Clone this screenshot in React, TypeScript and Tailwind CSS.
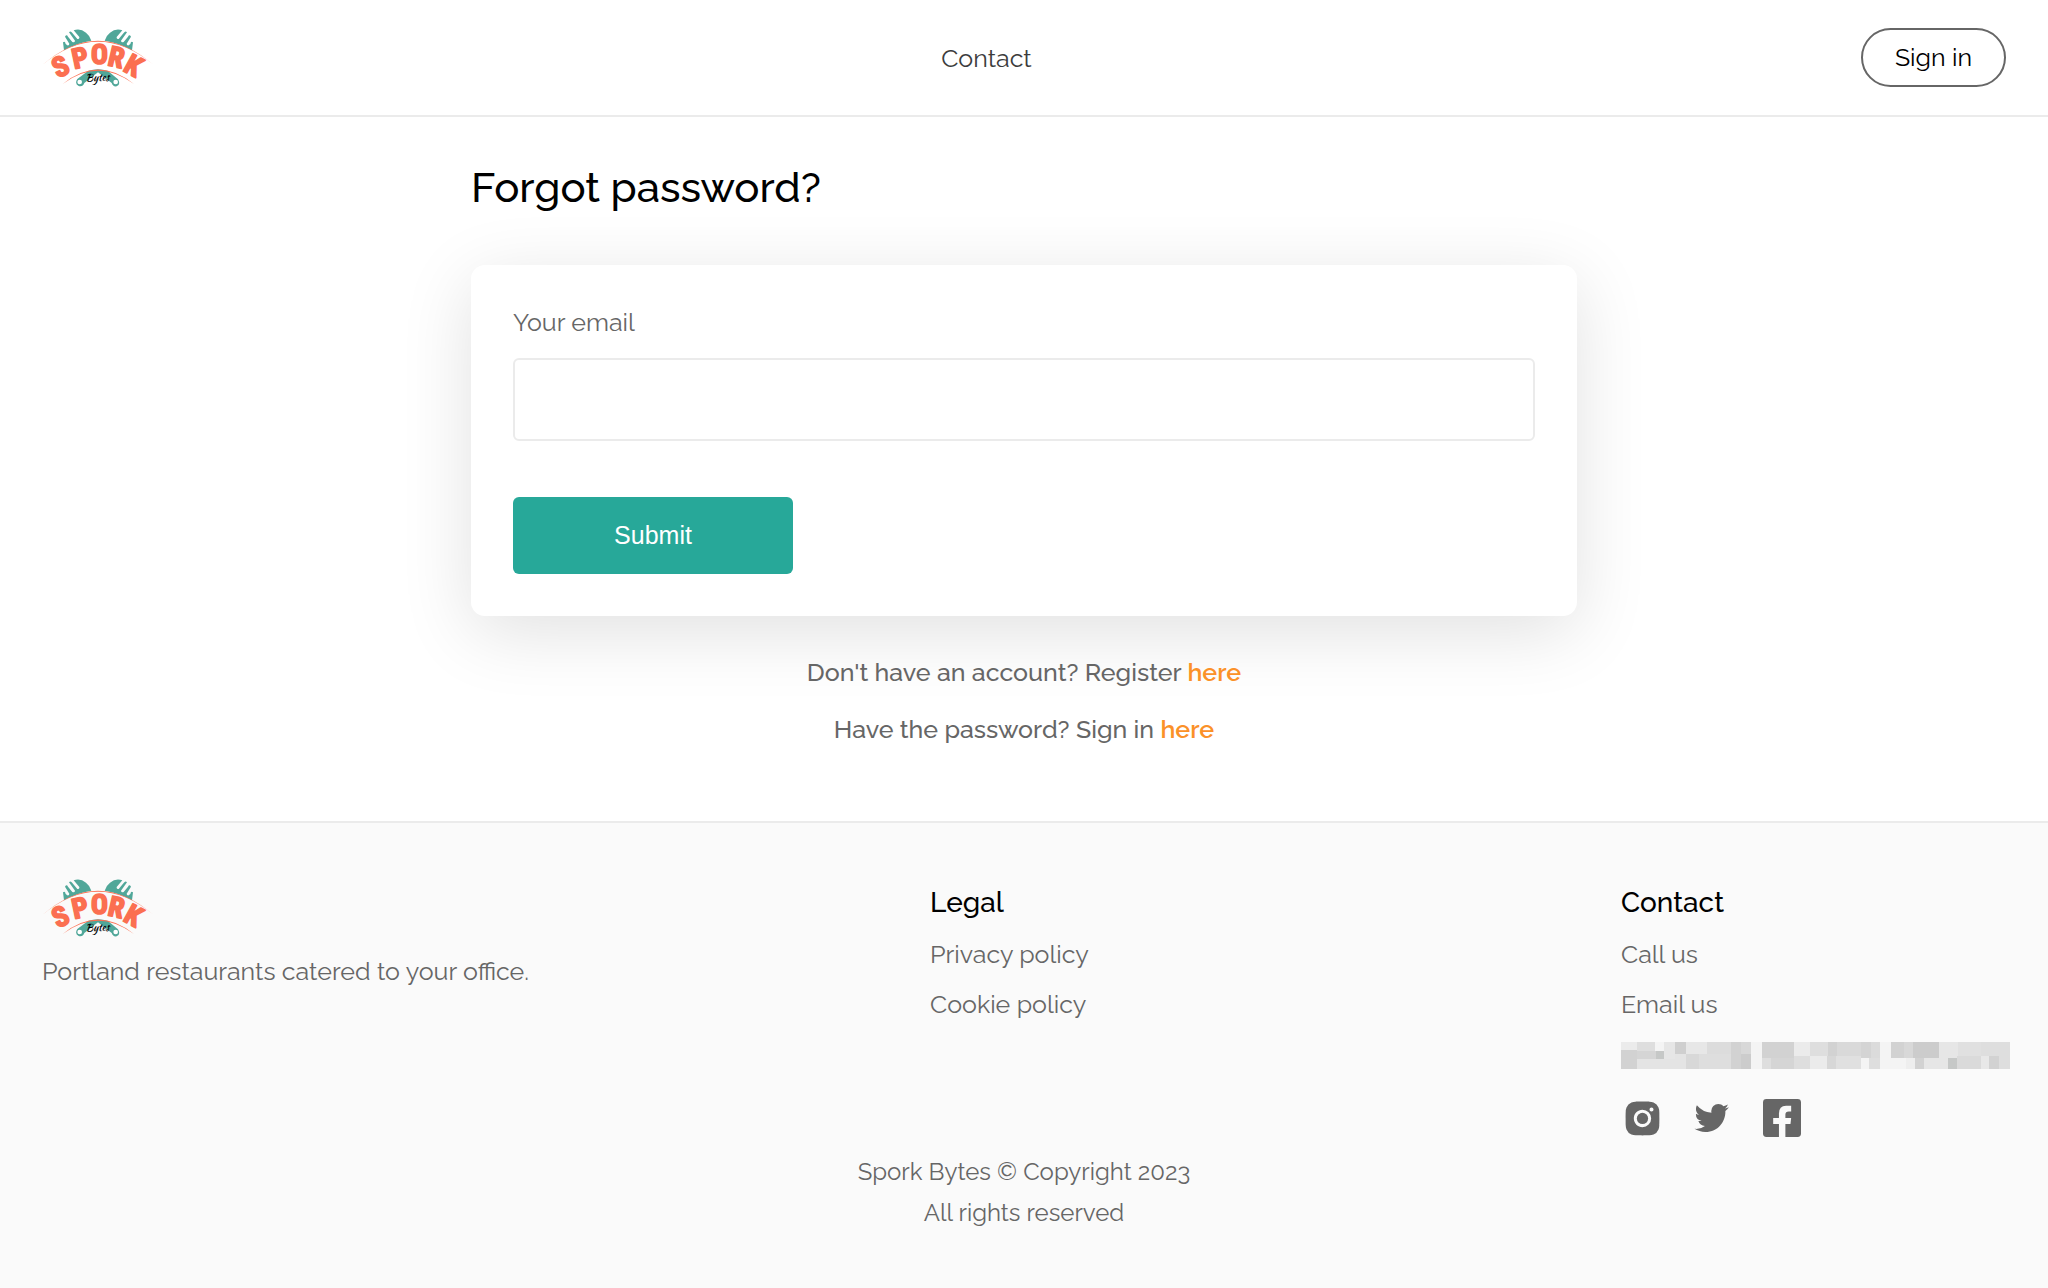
import type { ReactNode } from "react";
import { BiLogoInstagramAlt, BiLogoTwitter } from "react-icons/bi";

const logoLetters = [
  { char: "S", x: 104, y: 195, rotate: -25 },
  { char: "P", x: 156, y: 171, rotate: -12 },
  { char: "O", x: 208, y: 162, rotate: 0 },
  { char: "R", x: 253, y: 169, rotate: 13 },
  { char: "K", x: 296, y: 191, rotate: 29 },
];

// x, y, width, height, fill
const mosaic: [number, number, number, number, string][] = [
  [0, 0, 48, 24, "#ebebeb"],
  [0, 24, 48, 57, "#d2d2d2"],
  [48, 0, 54, 27, "#dedede"],
  [102, 0, 27, 27, "#f4f4f4"],
  [48, 27, 57, 24, "#d5d5d5"],
  [105, 27, 24, 24, "#c6c8c7"],
  [48, 51, 147, 30, "#e4e4e4"],
  [129, 0, 33, 51, "#e6e6e6"],
  [162, 0, 33, 36, "#cfcfcf"],
  [162, 36, 33, 45, "#e4e4e4"],
  [195, 0, 63, 36, "#e7e7e7"],
  [195, 36, 39, 45, "#d8d8d8"],
  [258, 0, 72, 36, "#dcdcdc"],
  [234, 36, 96, 45, "#dedede"],
  [330, 0, 30, 81, "#d2d2d2"],
  [360, 0, 30, 36, "#d8d8d8"],
  [360, 36, 30, 45, "#cccccc"],
  [390, 0, 33, 81, "#f4f4f4"],
  [423, 0, 96, 48, "#d2d2d2"],
  [423, 48, 27, 33, "#dedede"],
  [450, 48, 69, 33, "#d5d5d5"],
  [519, 0, 48, 42, "#ebebeb"],
  [519, 42, 48, 39, "#dedede"],
  [567, 0, 54, 42, "#dedede"],
  [567, 42, 51, 39, "#ebebeb"],
  [621, 0, 27, 42, "#d2d2d2"],
  [618, 42, 27, 39, "#d7d7d7"],
  [648, 0, 72, 48, "#d9d9d9"],
  [645, 42, 75, 39, "#e0e0e0"],
  [720, 0, 30, 48, "#d4d4d4"],
  [720, 48, 24, 33, "#f4f4f4"],
  [750, 0, 27, 48, "#dbdbdb"],
  [744, 48, 33, 33, "#dedede"],
  [777, 0, 33, 81, "#f4f4f4"],
  [810, 0, 39, 48, "#d2d2d2"],
  [849, 0, 27, 48, "#d8d8d8"],
  [810, 48, 45, 33, "#f4f4f4"],
  [855, 48, 27, 33, "#eeeeee"],
  [876, 0, 78, 48, "#cccccc"],
  [882, 48, 27, 33, "#d2d2d2"],
  [909, 48, 72, 33, "#e6e6e6"],
  [954, 0, 57, 48, "#e6e6e6"],
  [981, 48, 27, 33, "#c6c8c7"],
  [1011, 0, 69, 42, "#e0e0e0"],
  [1008, 42, 72, 39, "#dadada"],
  [1080, 0, 87, 81, "#dedede"],
  [1080, 42, 24, 39, "#e8e8e8"],
  [1104, 42, 30, 39, "#d2d2d2"],
];

function Logo() {
  return (
    <svg viewBox="36 56 336 174" className="block w-28" role="img" aria-label="Spork Bytes">
      <g fill="#50a799">
        <path d="M102 120 L99 96 Q105 90 107 101 L112 105 Q118 106 118 100 L105 79 Q110 71 114 79 L127 95 Q134 98 135 91 L117 66 Q122 60 127 68 L142 86 Q149 87 148 80 L131 60 Q151 53 168 67 Q180 76 184 91 Q140 98 102 120 Z" />
        <path d="M306 120 L309 96 Q303 90 301 101 L296 105 Q290 106 290 100 L303 79 Q298 71 294 79 L281 95 Q274 98 273 91 L291 66 Q286 60 281 68 L266 86 Q259 87 260 80 L277 60 Q257 53 240 67 Q228 76 224 91 Q268 98 306 120 Z" />
        <path d="M174 182 Q204 172 234 182 L264 207 Q273 222 260 228 Q249 230 245 218 L204 186 L163 218 Q158 231 146 227 Q133 220 142 206 Z" />
      </g>
      <path d="M36 165 Q204 17 372 165 Q204 24 36 165 Z" fill="#fb6f51" />
      <path d="M98 221 Q204 134 312 221 Q204 141 98 221 Z" fill="#fb6f51" />
      <circle cx="149" cy="215" r="7" fill="#fff" />
      <circle cx="257" cy="215" r="7" fill="#fff" />
      <g
        className="font-['Roboto_Condensed','Roboto',sans-serif] text-[84px] font-bold"
        fill="#fb6f51"
        stroke="#fb6f51"
        strokeWidth="5"
        strokeLinejoin="round"
        textAnchor="middle"
      >
        {logoLetters.map(({ char, x, y, rotate }) => (
          <text key={char} x={x} y={y} transform={`rotate(${rotate} ${x} ${y})`}>
            {char}
          </text>
        ))}
      </g>
      <text
        x="203"
        y="212"
        textAnchor="middle"
        transform="rotate(-3 203 212)"
        className="font-['Kaushan_Script','Pacifico','Dancing_Script','Lato',cursive] text-[31px]"
      >
        Bytes
      </text>
    </svg>
  );
}

function FacebookIcon() {
  return (
    <svg viewBox="0 0 112 112" className="size-[38px] shrink-0" fill="currentColor" aria-hidden="true">
      <path d="M10 0 H102 Q112 0 112 10 V102 Q112 112 102 112 H66 V74 H81 L83 56 H66 V46 Q66 37 76 37 H83 V20 H68 Q47 20 47 43 V56 H30 V74 H47 V112 H10 Q0 112 0 102 V10 Q0 0 10 0 Z" />
    </svg>
  );
}

function FooterLink({ href, children }: { href: string; children: ReactNode }) {
  return (
    <li>
      <a href={href} className="block leading-9">
        {children}
      </a>
    </li>
  );
}

function Header() {
  return (
    <header className="flex items-center justify-between border-b-2 border-[#ebebeb] px-[42px] py-7">
      <a href="/">
        <Logo />
      </a>
      <nav className="pr-[42px]">
        <a href="/contact" className="text-[#3c3c3c]">Contact</a>
      </nav>
      <button type="button" className="h-[59px] rounded-full border-2 border-[#666] px-8 pb-0.5 text-black">
        Sign in
      </button>
    </header>
  );
}

function ForgotPassword() {
  return (
    <main className="mx-auto w-full max-w-[1106px] pt-[47px] pb-[74px]">
      <h1 className="mb-[53px] text-[42px] leading-[48px] font-medium text-black">Forgot password?</h1>
      <form
        className="flex flex-col items-start rounded-[14px] bg-white p-[42px] shadow-[0_16px_72px_rgba(0,0,0,0.12)]"
        onSubmit={(e) => e.preventDefault()}
      >
        <label htmlFor="email" className="leading-[30px]">Your email</label>
        <input
          id="email"
          type="email"
          className="mt-[21px] h-[83px] w-full rounded-md border-2 border-[#ebebeb] bg-white px-6 outline-none"
        />
        <button
          type="submit"
          className="mt-14 h-[77px] w-[280px] rounded-md bg-[#27a899] pb-0.5 font-['Liberation_Sans',sans-serif] text-white"
        >
          Submit
        </button>
      </form>
      <div className="mt-[38px] flex flex-col gap-[21px] text-center leading-9 font-medium">
        <p>
          Don't have an account? Register <a href="/register" className="font-semibold text-[#fb9128]">here</a>
        </p>
        <p>
          Have the password? Sign in <a href="/login" className="font-semibold text-[#fb9128]">here</a>
        </p>
      </div>
    </main>
  );
}

function Footer() {
  return (
    <footer className="border-t-2 border-[#ebebeb] bg-[#fafafa] px-[42px] pt-14 pb-14">
      <div className="grid grid-cols-[minmax(0,888fr)_minmax(0,691fr)_minmax(0,385fr)]">
        <div>
          <Logo />
          <p className="mt-4 leading-9">Portland restaurants catered to your office.</p>
        </div>
        <div className="pt-[5px]">
          <h2 className="text-[28px] leading-[38px] font-medium text-black">Legal</h2>
          <ul className="mt-3.5 flex flex-col gap-3.5">
            <FooterLink href="/privacy">Privacy policy</FooterLink>
            <FooterLink href="/cookies">Cookie policy</FooterLink>
          </ul>
        </div>
        <div className="pt-[5px]">
          <h2 className="text-[28px] leading-[38px] font-medium text-black">Contact</h2>
          <ul className="mt-3.5 flex flex-col gap-3.5">
            <FooterLink href="tel:">Call us</FooterLink>
            <FooterLink href="mailto:">Email us</FooterLink>
          </ul>
          <svg viewBox="0 0 1167 81" className="mt-5 block w-[389px] max-w-none" shapeRendering="crispEdges" aria-hidden="true">
            {mosaic.map(([x, y, width, height, fill], index) => (
              <rect key={index} x={x} y={y} width={width} height={height} fill={fill} />
            ))}
          </svg>
          <div className="mt-7 flex gap-7">
            <a href="#instagram" aria-label="Instagram" className="flex size-[42px] items-center justify-center">
              <BiLogoInstagramAlt size={45} className="shrink-0" />
            </a>
            <a href="#twitter" aria-label="Twitter" className="flex size-[42px] items-center justify-center">
              <BiLogoTwitter size={42} className="shrink-0" />
            </a>
            <a href="#facebook" aria-label="Facebook" className="flex size-[42px] items-center justify-center">
              <FacebookIcon />
            </a>
          </div>
        </div>
      </div>
      <div className="mt-3 text-center text-2xl leading-[41px]">
        <p>Spork Bytes © Copyright 2023</p>
        <p>All rights reserved</p>
      </div>
    </footer>
  );
}

export default function App() {
  return (
    <div className="flex min-h-screen flex-col bg-white font-['Raleway','Lato',sans-serif] text-[25px] leading-9 text-[#666]">
      <Header />
      <ForgotPassword />
      <Footer />
    </div>
  );
}
